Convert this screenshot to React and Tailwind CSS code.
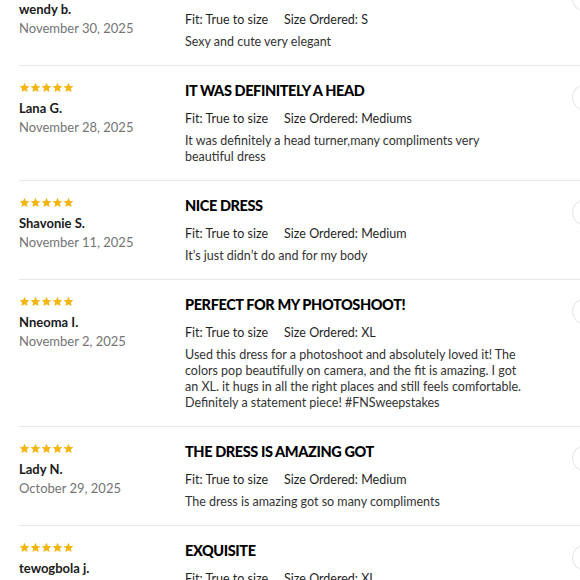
const reviews = [
  {
    name: 'wendy b.',
    date: 'November 30, 2025',
    title: '',
    size: 'S',
    body: 'Sexy and cute very elegant',
  },
  {
    name: 'Lana G.',
    date: 'November 28, 2025',
    title: 'IT WAS DEFINITELY A HEAD',
    size: 'Mediums',
    body: 'It was definitely a head turner,many compliments very beautiful dress',
  },
  {
    name: 'Shavonie S.',
    date: 'November 11, 2025',
    title: 'NICE DRESS',
    size: 'Medium',
    body: 'It’s just didn’t do and for my body',
  },
  {
    name: 'Nneoma I.',
    date: 'November 2, 2025',
    title: 'PERFECT FOR MY PHOTOSHOOT!',
    size: 'XL',
    body: 'Used this dress for a photoshoot and absolutely loved it! The colors pop beautifully on camera, and the fit is amazing. I got an XL. it hugs in all the right places and still feels comfortable. Definitely a statement piece! #FNSweepstakes',
  },
  {
    name: 'Lady N.',
    date: 'October 29, 2025',
    title: 'THE DRESS IS AMAZING GOT',
    size: 'Medium',
    body: 'The dress is amazing got so many compliments',
  },
  {
    name: 'tewogbola j.',
    date: 'October 27, 2025',
    title: 'EXQUISITE',
    size: 'XL',
    body: 'Exquisite',
  },
]

function Stars() {
  return (
    <div className="-mt-px flex h-[13px] items-center">
      {[0, 1, 2, 3, 4].map((i) => (
        <svg key={i} width="11" height="11" viewBox="0 0 24 24">
          <path
            fill="#f5b50f"
            d="M12 1.5l3.1 7.1 7.7.7-5.8 5.1 1.7 7.6L12 18l-6.7 4 1.7-7.6-5.8-5.1 7.7-.7z"
          />
        </svg>
      ))}
    </div>
  )
}

function Review({ r }) {
  return (
    <div className="flex border-t border-[#e8e8e8] pt-[16px] pb-[15px]">
      {/* left: stars, author */}
      <div className="w-[166px] shrink-0">
        <Stars />
        <p className="mt-[4px] text-[13px] leading-[20px] font-bold text-[#1a1a1a]">{r.name}</p>
        <p className="text-[13px] leading-[18px] text-[#747474]">{r.date}</p>
      </div>

      {/* right: title + details */}
      <div className="flex-1 pr-[30px]">
        <h3 className="h-[18px] text-[14.5px] leading-[18px] font-black tracking-[-0.4px] text-black">{r.title}</h3>
        <p className="mt-[9px] text-[12.5px] leading-[20px] text-[#1f1f1f]">
          Fit: True to size<span className="ml-[16px]">Size Ordered: {r.size}</span>
        </p>
        <p className="mt-[4px] max-w-[342px] text-[12.5px] leading-[16px] text-[#333]">{r.body}</p>
      </div>

      <div className="mt-[2px] h-[27px] w-[27px] shrink-0 rounded-full border border-[#e2e2e2]" />
    </div>
  )
}

export default function App() {
  return (
    <div
      className="h-[580px] w-[580px] overflow-hidden bg-white"
      style={{ fontFamily: 'Lato, "Liberation Sans", sans-serif' }}
    >
      <div className="-mt-[34px] w-[599px] pl-[19px]">
        {reviews.map((r, i) => (
          <Review key={i} r={r} />
        ))}
      </div>
    </div>
  )
}
